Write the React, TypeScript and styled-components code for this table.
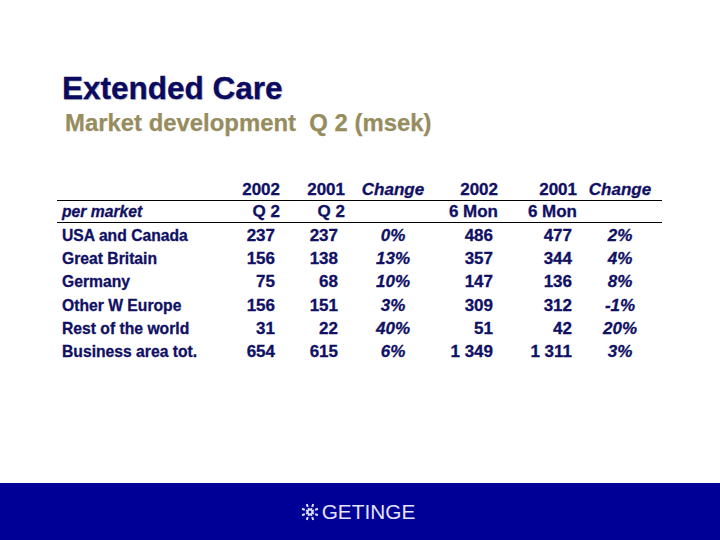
import * as React from 'react'
import styled, { createGlobalStyle } from 'styled-components'

const NAVY = '#101064'
const OLIVE = '#978c5e'
const FOOTER_BLUE = '#000097'

const GlobalStyle = createGlobalStyle`
	html, body {
		margin: 0;
		padding: 0;
		background: #fff;
	}
	body {
		font-family: 'Liberation Sans', Arial, sans-serif;
	}
`

const Slide = styled.div`
	width: 720px;
	height: 540px;
	display: flex;
	flex-direction: column;
	overflow: hidden;
`

const Main = styled.main`
	flex: 1;
	padding-top: 70px;
`

const Title = styled.h1`
	margin: 0 0 0 62px;
	font-size: 31.5px;
	line-height: 36px;
	font-weight: bold;
	color: #0a0a60;
	text-shadow: 1px 1px 1px #c0c0cc;
	-webkit-text-stroke: 0.3px #0a0a60;
`

const Subtitle = styled.h2`
	margin: 3px 0 0 65px;
	font-size: 23.9px;
	line-height: 28px;
	font-weight: bold;
	color: ${OLIVE};
	white-space: pre;
	-webkit-text-stroke: 0.25px ${OLIVE};
`

const Table = styled.div`
	margin: 42px 0 0 57px;
	width: 605px;
	color: ${NAVY};
	font-weight: bold;
	-webkit-text-stroke: 0.3px ${NAVY};
`

const Row = styled.div<{ $height: number; $rule?: boolean }>`
	display: grid;
	grid-template-columns: 168px 56px 65px 94px 59px 79px 84px;
	align-items: center;
	height: ${(p) => p.$height}px;
	border-bottom: ${(p) => (p.$rule ? '1px solid #000' : 'none')};
`

const Body = styled.div`
	padding-top: 1px;
`

const Label = styled.div<{ $italic?: boolean }>`
	padding-left: 5px;
	font-size: 15.7px;
	font-style: ${(p) => (p.$italic ? 'italic' : 'normal')};
	white-space: nowrap;
`

const Num = styled.div<{ $pad: number }>`
	text-align: right;
	padding-right: ${(p) => p.$pad}px;
	font-size: 17px;
	white-space: nowrap;
`

const Pct = styled.div`
	text-align: center;
	font-size: 17px;
	font-style: italic;
	white-space: nowrap;
`

const Footer = styled.footer`
	height: 57px;
	background: ${FOOTER_BLUE};
	display: flex;
	align-items: center;
	justify-content: center;
	gap: 3px;
	padding-right: 4px;
`

const Brand = styled.span`
	font-family: 'Liberation Sans', Arial, sans-serif;
	font-size: 20.8px;
	color: #e4e4ff;
	line-height: 1;
	padding-top: 1px;
`

const Mark = () => (
	<svg width="18" height="18" viewBox="-9 -9 18 18">
		{Array.from({ length: 8 }).map((_, i) => {
			const a = (i * Math.PI) / 4 + Math.PI / 8
			const c = Math.cos(a)
			const s = Math.sin(a)
			return (
				<g key={i} stroke="#e4e4ff" strokeWidth="2" strokeLinecap="butt">
					<line x1={c * 1.4} y1={s * 1.4} x2={c * 4.3} y2={s * 4.3} />
					<line x1={c * 5.6} y1={s * 5.6} x2={c * 8.6} y2={s * 8.6} />
				</g>
			)
		})}
	</svg>
)

type Market = {
	name: string
	q02: string
	q01: string
	qChg: string
	h02: string
	h01: string
	hChg: string
}

const markets: Market[] = [
	{ name: 'USA and Canada', q02: '237', q01: '237', qChg: '0%', h02: '486', h01: '477', hChg: '2%' },
	{ name: 'Great Britain', q02: '156', q01: '138', qChg: '13%', h02: '357', h01: '344', hChg: '4%' },
	{ name: 'Germany', q02: '75', q01: '68', qChg: '10%', h02: '147', h01: '136', hChg: '8%' },
	{ name: 'Other W Europe', q02: '156', q01: '151', qChg: '3%', h02: '309', h01: '312', hChg: '-1%' },
	{ name: 'Rest of the world', q02: '31', q01: '22', qChg: '40%', h02: '51', h01: '42', hChg: '20%' },
	{ name: 'Business area tot.', q02: '654', q01: '615', qChg: '6%', h02: '1 349', h01: '1 311', hChg: '3%' },
]

export default function App() {
	return (
		<>
			<GlobalStyle />
			<Slide>
				<Main>
					<Title>Extended Care</Title>
					<Subtitle>{'Market development  Q 2 (msek)'}</Subtitle>
					<Table>
						<Row $height={21} $rule>
							<div />
							<Num $pad={1}>2002</Num>
							<Num $pad={1}>2001</Num>
							<Pct>Change</Pct>
							<Num $pad={1}>2002</Num>
							<Num $pad={1}>2001</Num>
							<Pct>Change</Pct>
						</Row>
						<Row $height={21} $rule>
							<Label $italic>per market</Label>
							<Num $pad={1}>Q 2</Num>
							<Num $pad={1}>Q 2</Num>
							<div />
							<Num $pad={1}>6 Mon</Num>
							<Num $pad={1}>6 Mon</Num>
							<div />
						</Row>
						<Body>
							{markets.map((m) => (
								<Row key={m.name} $height={23.3}>
									<Label>{m.name}</Label>
									<Num $pad={6}>{m.q02}</Num>
									<Num $pad={8}>{m.q01}</Num>
									<Pct>{m.qChg}</Pct>
									<Num $pad={6}>{m.h02}</Num>
									<Num $pad={6}>{m.h01}</Num>
									<Pct>{m.hChg}</Pct>
								</Row>
							))}
						</Body>
					</Table>
				</Main>
				<Footer>
					<Mark />
					<Brand>GETINGE</Brand>
				</Footer>
			</Slide>
		</>
	)
}
